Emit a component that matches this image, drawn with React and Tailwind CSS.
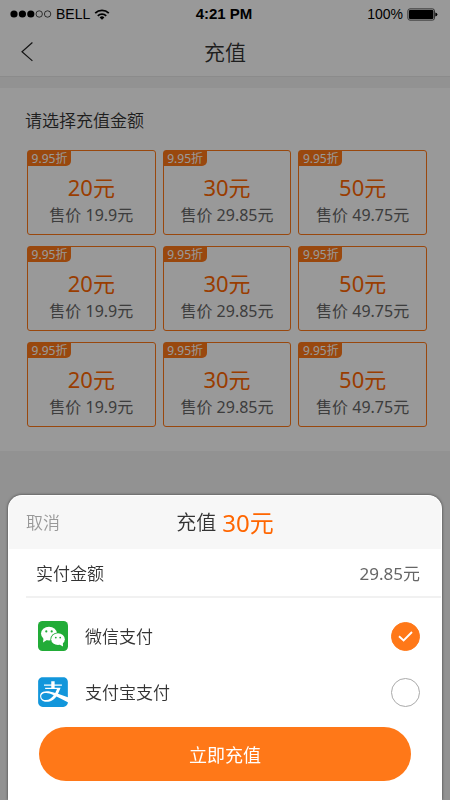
import { useState } from "react";
import { FaAlipay } from "react-icons/fa";

const amounts = [
  { value: 20, price: "19.9" },
  { value: 30, price: "29.85" },
  { value: 50, price: "49.75" },
];

const plans = [...amounts, ...amounts, ...amounts].map((item, index) => ({
  ...item,
  id: index,
}));

function WechatIcon() {
  return (
    <svg width="30" height="30" viewBox="0 0 30 30">
      <rect width="30" height="30" rx="4.5" fill="#22ac38" />
      <ellipse cx="11" cy="12.6" rx="8" ry="6.8" fill="#fff" />
      <path d="M5.6 16.5 L5 21.4 L9.6 18.6 Z" fill="#fff" />
      <ellipse cx="20" cy="18.2" rx="7.6" ry="6.7" fill="#22ac38" />
      <ellipse cx="20" cy="18.2" rx="6.8" ry="5.9" fill="#fff" />
      <path d="M21.4 23.4 L25 25.6 L24.8 21.4 Z" fill="#fff" />
      <g fill="#22ac38">
        <circle cx="8.3" cy="10.4" r="1.1" />
        <circle cx="13.7" cy="10.4" r="1.1" />
        <circle cx="17.8" cy="16.6" r="0.9" />
        <circle cx="22.2" cy="16.6" r="0.9" />
      </g>
    </svg>
  );
}

function AlipayIcon() {
  return (
    <span className="flex h-[30px] w-[30px] items-center justify-center text-[#1296db]">
      <FaAlipay size={34} className="shrink-0" />
    </span>
  );
}

const methods = [
  { id: "wechat", label: "微信支付", Icon: WechatIcon },
  { id: "alipay", label: "支付宝支付", Icon: AlipayIcon },
];

function StatusBar() {
  return (
    <div className="grid h-7 grid-cols-3 items-center pr-3 pl-[10px] font-['Liberation_Sans',sans-serif] text-sm font-normal text-black">
      <div className="flex items-center gap-1">
        <svg width="42" height="8" viewBox="0 0 42 8">
          <circle cx="4" cy="4" r="3.6" />
          <circle cx="12.4" cy="4" r="3.6" />
          <circle cx="20.8" cy="4" r="3.6" />
          <circle cx="29.2" cy="4" r="3.2" fill="none" stroke="#000" strokeWidth="0.7" />
          <circle cx="37.6" cy="4" r="3.2" fill="none" stroke="#000" strokeWidth="0.7" />
        </svg>
        <span>BELL</span>
        <svg width="16" height="11" viewBox="0 0 16 11" fill="none" stroke="#000" strokeWidth="1.8">
          <path d="M1.2 4.2 A9.8 9.8 0 0 1 14.8 4.2" />
          <path d="M3.8 6.9 A6 6 0 0 1 12.2 6.9" />
          <path d="M8 10.8 L5.6 8.5 A3.4 3.4 0 0 1 10.4 8.5 Z" fill="#000" stroke="none" />
        </svg>
      </div>
      <span className="text-center text-[15px] font-bold">4:21 PM</span>
      <div className="flex items-center justify-end gap-1">
        <span>100%</span>
        <svg width="31" height="13" viewBox="0 0 31 13">
          <rect x="0.9" y="0.9" width="26.6" height="11.2" rx="2" fill="none" stroke="#555" strokeWidth="1" />
          <rect x="2" y="2" width="24.4" height="9" rx="1" />
          <path d="M28.3 4.4 Q30.4 5 30.4 6.5 Q30.4 8 28.3 8.6 Z" />
        </svg>
      </div>
    </div>
  );
}

function PlanCard({ plan, onSelect }) {
  return (
    <button
      type="button"
      onClick={() => onSelect(plan)}
      className="flex h-[85px] flex-col items-center rounded-[3px] border border-[#ff7818] font-normal"
    >
      <span className="flex h-[15px] w-[43px] items-center justify-center self-start rounded-br-[5px] bg-[#ff7818] text-xs text-white">
        9.95折
      </span>
      <span className="mt-[5px] text-[22px] leading-8 text-[#ff6600]">
        {plan.value}元
      </span>
      <span className="text-base leading-6 text-[#666]">
        售价 {plan.price}元
      </span>
    </button>
  );
}

function PaymentOption({ method, checked, onChange }) {
  const { id, label, Icon } = method;

  return (
    <label htmlFor={id} className="flex h-14 items-center">
      <Icon />
      <span className="ml-[17px] flex-1 pt-0.5">{label}</span>
      <span className="grid place-items-center">
        <input
          id={id}
          type="radio"
          name="payment"
          checked={checked}
          onChange={() => onChange(id)}
          className="col-start-1 row-start-1 h-[29px] w-[29px] appearance-none rounded-full border border-[#aaa] checked:border-[#ff7818] checked:bg-[#ff7818]"
        />
        {checked && (
          <svg
            width="15"
            height="11"
            viewBox="0 0 15 11"
            fill="none"
            stroke="#fff"
            strokeWidth="1.9"
            className="pointer-events-none col-start-1 row-start-1"
          >
            <path d="M1 5.2 L5.6 9.4 L14 1" />
          </svg>
        )}
      </span>
    </label>
  );
}

export default function App() {
  const [selected, setSelected] = useState(plans[1]);
  const [payment, setPayment] = useState("wechat");
  const [open, setOpen] = useState(true);

  const handleSelect = (plan) => {
    setSelected(plan);
    setOpen(true);
  };

  return (
    <div className="min-h-screen bg-[#f4f4f4] font-['Noto_Sans','Noto_Sans_CJK_SC',sans-serif] text-[17px] font-[350] text-[#333]">
      <header className="border-b border-[#e8e8e8] bg-white">
        <StatusBar />
        <div className="grid h-12 grid-cols-[48px_1fr_48px] items-center">
          <button type="button" aria-label="返回" className="pl-5">
            <svg width="14" height="20" viewBox="0 0 14 20" fill="none" stroke="#222" strokeWidth="1.2">
              <path d="M12.4 0.5 L2 9.8 L12.4 18.9" />
            </svg>
          </button>
          <h1 className="pt-0.5 text-center text-[21px] font-[350]">充值</h1>
        </div>
      </header>

      <main className="mt-[11px] bg-white pt-[21px] pr-[23px] pb-6 pl-[27px]">
        <h2 className="-ml-0.5 leading-6 font-[350]">请选择充值金额</h2>
        <div className="mt-[17px] grid grid-cols-3 gap-x-[7px] gap-y-[11px]">
          {plans.map((plan) => (
            <PlanCard key={plan.id} plan={plan} onSelect={handleSelect} />
          ))}
        </div>
      </main>

      {open && (
        <>
          <div className="fixed inset-0 bg-black/40" />
          <section className="fixed inset-x-2 bottom-0 overflow-hidden rounded-t-[14px] border border-b-0 border-white bg-white shadow-[0_0_3px_rgba(0,0,0,0.6)]">
            <div className="grid h-[53px] grid-cols-[1fr_auto_1fr] items-center bg-[#f7f7f7] px-[17px]">
              <button
                type="button"
                onClick={() => setOpen(false)}
                className="justify-self-start text-[#999]"
              >
                取消
              </button>
              <h2 className="flex items-center gap-1.5 text-xl font-[350]">
                充值
                <span className="text-2xl font-normal text-[#ff6600]">
                  {selected.value}元
                </span>
              </h2>
            </div>
            <div className="ml-[17px] flex h-[49px] items-center justify-between border-b-2 border-[#f1f1f1] pt-0.5 pr-[21px] pl-[10px]">
              <span>实付金额</span>
              <span className="font-normal text-[#666]">{selected.price}元</span>
            </div>
            <div className="pt-[10px] pr-[21px] pb-[7px] pl-[29px]">
              {methods.map((method) => (
                <PaymentOption
                  key={method.id}
                  method={method}
                  checked={payment === method.id}
                  onChange={setPayment}
                />
              ))}
            </div>
            <div className="px-[30px] pb-[19px]">
              <button
                type="button"
                className="h-[54px] w-full rounded-full bg-[#ff7818] pt-0.5 text-lg font-normal text-white"
              >
                立即充值
              </button>
            </div>
          </section>
        </>
      )}
    </div>
  );
}
